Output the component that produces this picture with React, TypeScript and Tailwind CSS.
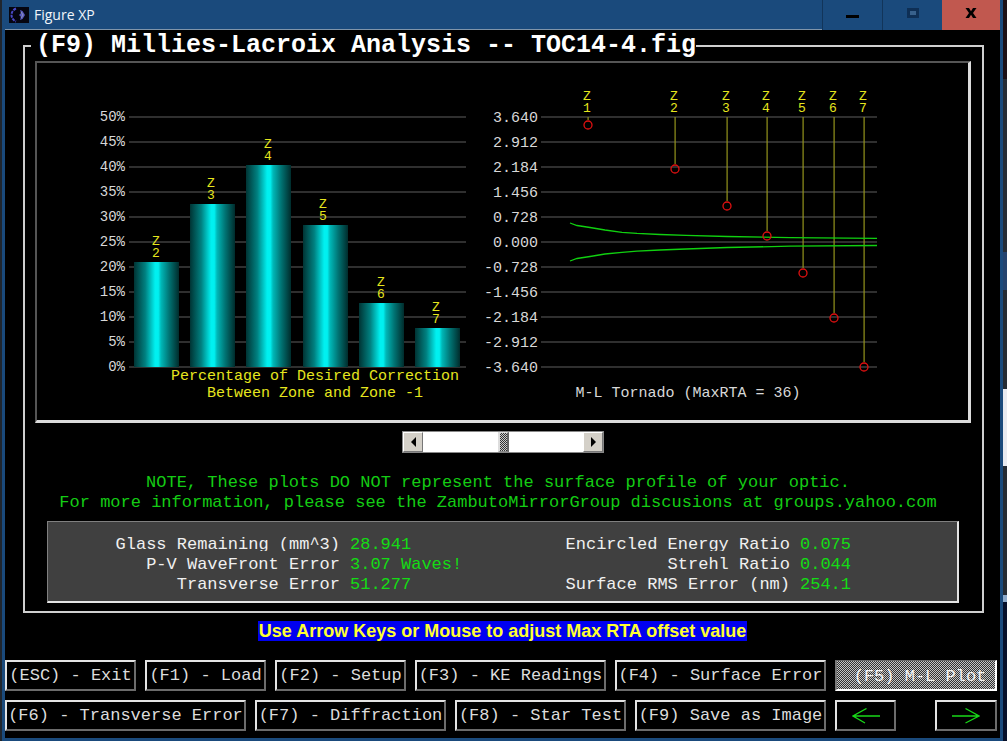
import { useState } from "react";

const bars = [
  { zone: 2, x: 134, y: 262, labelX: 156 },
  { zone: 3, x: 190, y: 204, labelX: 211 },
  { zone: 4, x: 246, y: 165, labelX: 268 },
  { zone: 5, x: 303, y: 225, labelX: 323 },
  { zone: 6, x: 359, y: 303, labelX: 381 },
  { zone: 7, x: 415, y: 328, labelX: 436 },
];
const percents = [50, 45, 40, 35, 30, 25, 20, 15, 10, 5, 0];
const offsets = ["3.640", "2.912", "2.184", "1.456", "0.728", "0.000", "-0.728", "-1.456", "-2.184", "-2.912", "-3.640"];
const drops = [
  { zone: 1, x: 588, y: 125 },
  { zone: 2, x: 675, y: 169 },
  { zone: 3, x: 727, y: 206 },
  { zone: 4, x: 767, y: 236 },
  { zone: 5, x: 803, y: 273 },
  { zone: 6, x: 834, y: 318 },
  { zone: 7, x: 864, y: 367 },
];
const stats = [
  ["Glass Remaining (mm^3)", "28.941", "Encircled Energy Ratio", "0.075"],
  ["P-V WaveFront Error", "3.07 Waves!", "Strehl Ratio", "0.044"],
  ["Transverse Error", "51.277", "Surface RMS Error (nm)", "254.1"],
];

function ZoneLabel({ zone, x, y }: { zone: number; x: number; y: number }) {
  return (
    <text textAnchor="middle" className="fill-[#e6e61e] text-[13px]">
      <tspan x={x} y={y - 12}>Z</tspan>
      <tspan x={x} y={y}>{zone}</tspan>
    </text>
  );
}

function CorrectionChart() {
  return (
    <figure>
      <svg viewBox="90 85 380 283" className="block w-full overflow-visible" role="img" aria-label="Correction by zone">
        <defs>
          <linearGradient id="bar">
            <stop offset="0" stopColor="#003434" />
            <stop offset="0.25" stopColor="#008080" />
            <stop offset="0.47" stopColor="#00f0f0" />
            <stop offset="0.54" stopColor="#00f0f0" />
            <stop offset="0.6" stopColor="#00b8b8" />
            <stop offset="0.78" stopColor="#007474" />
            <stop offset="1" stopColor="#002c2c" />
          </linearGradient>
        </defs>
        {percents.map((p, i) => (
          <g key={p}>
            <rect x="129" y={116 + i * 25} width="337" height="2" fill="#2f2f2f" shapeRendering="crispEdges" />
            <text x="125" y={121 + i * 25} textAnchor="end" className="fill-[#d8d8d8] text-[14px]">{p}%</text>
          </g>
        ))}
        {bars.map((b) => (
          <g key={b.zone}>
            <rect x={b.x} y={b.y} width="45" height={367 - b.y} fill="url(#bar)" />
            <ZoneLabel zone={b.zone} x={b.labelX} y={b.y - 5} />
          </g>
        ))}
      </svg>
      <figcaption className="pl-[70px] text-center text-[15px] leading-[17px] whitespace-nowrap text-[#e6e61e]">
        Percentage of Desired Correction
        <br />
        Between Zone and Zone -1
      </figcaption>
    </figure>
  );
}

function TornadoChart() {
  return (
    <figure>
      <svg viewBox="480 85 400 283" className="block w-full overflow-visible" role="img" aria-label="Tornado plot">
        {offsets.map((o, i) => (
          <g key={o}>
            <rect x="541" y={116 + i * 25} width="336" height="2" fill="#2f2f2f" shapeRendering="crispEdges" />
            <text x="538" y={122 + i * 25} textAnchor="end" className="fill-[#d8d8d8] text-[15px]">{o}</text>
          </g>
        ))}
        {drops.map((d) => (
          <g key={d.zone}>
            <ZoneLabel zone={d.zone} x={d.x - 1} y={112} />
            <path d={`M${d.x + 0.1} 117 V${Math.max(d.y - 5, 119)}`} stroke="#94941c" strokeWidth="1.2" />
          </g>
        ))}
        <g fill="none" stroke="#10d010" strokeWidth="1.3">
          <path d="M570 223 L577 225.5 L590 227.5 L605 230 L622 232.3 L637 233.4 L660 234.5 L686 235.3 L727 236.5 L790 237.6 L877 238.4" />
          <path d="M570 261 L577 258.5 L590 256.5 L605 254 L622 252.3 L637 251.2 L660 250 L686 249 L727 247.5 L790 246.2 L877 245.5" />
        </g>
        {drops.map((d) => (
          <circle key={d.zone} cx={d.x} cy={d.y} r="4" fill="none" stroke="#e01010" strokeWidth="1.3" />
        ))}
      </svg>
      <figcaption className="pt-[17px] pl-4 text-center text-[15px] leading-[17px] whitespace-nowrap text-[#d8d8d8]">
        M-L Tornado (MaxRTA = 36)
      </figcaption>
    </figure>
  );
}

const keyButton =
  "flex h-[31px] min-w-0 items-center justify-center border-2 border-t-[#e4e4e4] border-l-[#e4e4e4] border-r-[#6c6c6c] border-b-[#6c6c6c] bg-black text-[17px] leading-5 whitespace-nowrap text-[#dcdcdc]";
const scrollButton =
  "flex w-5 items-center justify-center border border-t-white border-l-white border-r-[#777] border-b-[#777] bg-[#d4d0c8]";

export default function App() {
  const [offset, setOffset] = useState(50);
  return (
    <div className="flex min-h-screen bg-[#1c222c]">
      <div className="w-0.5 bg-[#20262e]" />
      <div className="flex min-w-0 flex-1 flex-col border-x-[3px] border-b-[3px] border-[#1a4a7c] bg-black font-['Liberation_Mono',monospace]">
        <header className="flex h-[30px] items-stretch bg-[#1a4a7c]">
          <div className="flex flex-1 items-center border-b border-[#8095aa] pl-1">
            <svg viewBox="0 0 20 16" className="h-4 w-5">
              <rect width="20" height="16" fill="#05050f" />
              <path d="M7 1.5 C1 4 1 12 7 14.5" fill="none" stroke="#4a4ac8" strokeWidth="2" strokeDasharray="3 1" />
              <path d="M11 3 L13.500 4 L16 8 L13.500 12 L11 13 L12 10 L10 8 L12 6 Z" fill="#5a5ac0" />
              <path d="M12 5 L14 8 L12 11" fill="none" stroke="#8c94b8" />
            </svg>
            <h1 className="pl-[5px] font-['Open_Sans',sans-serif] text-[14px] leading-5 text-[#f2f6fa]">Figure XP</h1>
          </div>
          <div className="flex">
            <button aria-label="Minimize" className="flex w-[60px] items-center justify-center border-l border-[#12355a]">
              <span className="mt-[3px] h-[3px] w-[13px] bg-black" />
            </button>
            <button aria-label="Maximize" className="flex w-[60px] items-center justify-center border-l border-[#12355a]">
              <span className="mb-1 h-[10px] w-3 border-[3px] border-[#0e2f55] bg-[#38618c]" />
            </button>
            <button aria-label="Close" className="flex w-[58px] items-center justify-center bg-[#c1584f]">
              <svg viewBox="0 0 12 10" className="mb-1 h-[10px] w-3">
                <path d="M0.500 0 H4 L6 3.200 L8 0 H11.500 L8 5 L11.500 10 H8 L6 6.800 L4 10 H0.500 L4 5 Z" />
              </svg>
            </button>
          </div>
        </header>

        <main className="flex flex-1 flex-col">
          <fieldset className="mr-4 ml-[18px] min-w-0 border-2 border-[#cfcfcf] pr-[11px] pb-2 pl-[10px]">
            <legend className="-ml-1 pl-[5px] text-[25px] leading-[31px] font-bold whitespace-nowrap text-white">
              (F9) Millies-Lacroix Analysis -- TOC14-4.fig
            </legend>

            <div className="grid grid-cols-[380fr_400fr] gap-x-[10px] border-t-2 border-r-[3px] border-b-[3px] border-l-2 border-t-[#555] border-r-[#dcdcdc] border-b-[#dcdcdc] border-l-[#555] pt-[22px] pr-[88px] pb-[18px] pl-[53px]">
              <CorrectionChart />
              <TornadoChart />
            </div>

            <div className="mx-auto mt-2 flex h-[22px] w-[202px] border border-[#888] bg-white">
              <button aria-label="Decrease offset" className={scrollButton} onClick={() => setOffset(Math.max(0, offset - 1))}>
                <svg viewBox="0 0 5 10" className="h-[10px] w-[5px]"><path d="M5 0 V10 L0 5 Z" /></svg>
              </button>
              <input
                type="range"
                aria-label="Max RTA offset"
                value={offset}
                onChange={(e) => setOffset(Number(e.target.value))}
                className="m-0 min-w-0 flex-1 appearance-none bg-white [&::-webkit-slider-thumb]:h-5 [&::-webkit-slider-thumb]:w-[11px] [&::-webkit-slider-thumb]:appearance-none [&::-webkit-slider-thumb]:border-y [&::-webkit-slider-thumb]:border-r-2 [&::-webkit-slider-thumb]:border-l-2 [&::-webkit-slider-thumb]:border-t-[#ddd] [&::-webkit-slider-thumb]:border-r-[#666] [&::-webkit-slider-thumb]:border-b-[#888] [&::-webkit-slider-thumb]:border-l-[#ddd] [&::-webkit-slider-thumb]:bg-[repeating-conic-gradient(#333_0_25%,#ccc_0_50%)] [&::-webkit-slider-thumb]:bg-[length:2px_2px]"
              />
              <button aria-label="Increase offset" className={scrollButton} onClick={() => setOffset(Math.min(100, offset + 1))}>
                <svg viewBox="0 0 5 10" className="h-[10px] w-[5px]"><path d="M0 0 V10 L5 5 Z" /></svg>
              </button>
            </div>

            <p className="mt-5 pr-[10px] text-center text-[17px] leading-5 whitespace-nowrap text-[#14cc14]">
              NOTE, These plots DO NOT represent the surface profile of your optic.
              <br />
              For more information, please see the ZambutoMirrorGroup discusions at groups.yahoo.com
            </p>

            <dl className="mt-2 mr-3 ml-3 grid grid-cols-[292fr_120fr_310fr_157fr] gap-x-[10px] border-t border-r-2 border-b-2 border-l border-t-[#808080] border-r-[#e4e4e4] border-b-[#e4e4e4] border-l-[#808080] bg-[#404040] pt-[13px] pb-[6px] text-[17px] leading-5 whitespace-nowrap">
              {stats.map(([a, av, b, bv]) => (
                <div key={a} className="group contents">
                  <dt className="text-right text-[#f0f0f0] group-first:[clip-path:inset(0_0_4px_0)]">{a}</dt>
                  <dd className="text-[#14dc14]">{av}</dd>
                  <dt className="text-right text-[#f0f0f0] group-first:[clip-path:inset(0_0_4px_0)]">{b}</dt>
                  <dd className="text-[#14dc14]">{bv}</dd>
                </div>
              ))}
            </dl>
          </fieldset>

          <p className="mx-auto mt-2 bg-[#0000f0] px-px font-['Liberation_Sans',sans-serif] text-[18px] leading-5 font-bold whitespace-nowrap text-[#ffff30]">
            Use Arrow Keys or Mouse to adjust Max RTA offset value
          </p>

          <nav className="mt-[19px] flex flex-col gap-[9px] pr-[3px] pb-[7px]">
            <div className="flex gap-[9px]">
              <button className={`${keyButton} flex-[127]`}>(ESC) - Exit</button>
              <button className={`${keyButton} flex-[117]`}>(F1) - Load</button>
              <button className={`${keyButton} flex-[127]`}>(F2) - Setup</button>
              <button className={`${keyButton} flex-[187]`}>(F3) - KE Readings</button>
              <button className={`${keyButton} flex-[207]`}>(F4) - Surface Error</button>
              <button
                aria-pressed="true"
                className="flex h-[31px] min-w-0 flex-[150] items-center justify-center border-t border-r-2 border-b-2 border-l-2 border-t-[#666] border-r-white border-b-white border-l-[#777] bg-[repeating-conic-gradient(#333_0_25%,#c4c4c4_0_50%)] bg-[length:2px_2px] pt-[3px] pl-2 text-[17px] leading-5 whitespace-nowrap text-[#f4f4f4]"
              >
                (F5) M-L Plot
              </button>
            </div>
            <div className="flex gap-[9px]">
              <button className={`${keyButton} flex-[237]`}>(F6) - Transverse Error</button>
              <button className={`${keyButton} flex-[187]`}>(F7) - Diffraction</button>
              <button className={`${keyButton} flex-[167]`}>(F8) - Star Test</button>
              <button className={`${keyButton} flex-[187]`}>(F9) Save as Image</button>
              <button aria-label="Previous" className={`${keyButton} flex-[57]`}>
                <svg viewBox="0 0 28 16" className="h-4 w-7" fill="none" stroke="#18d818" strokeWidth="1.300">
                  <path d="M28 8 H1 M14.500 .5 L1 8 L13 15" />
                </svg>
              </button>
              <button aria-label="Next" className={`${keyButton} ml-[30px] flex-[58]`}>
                <svg viewBox="0 0 28 16" className="h-4 w-7" fill="none" stroke="#18d818" strokeWidth="1.300">
                  <path d="M0 8 H27 M13.500 .5 L27 8 L13.500 15" />
                </svg>
              </button>
            </div>
          </nav>
        </main>
      </div>
      <div className="w-1 bg-[linear-gradient(#1c1016_0_79px,#262d36_0_252px,#24436e_0_290px,#262c34_0_389px,#e8eaf0_0_466px,#262c34_0_595px,#8ca8c8_0_602px,#06102a_0)]" />
    </div>
  );
}
